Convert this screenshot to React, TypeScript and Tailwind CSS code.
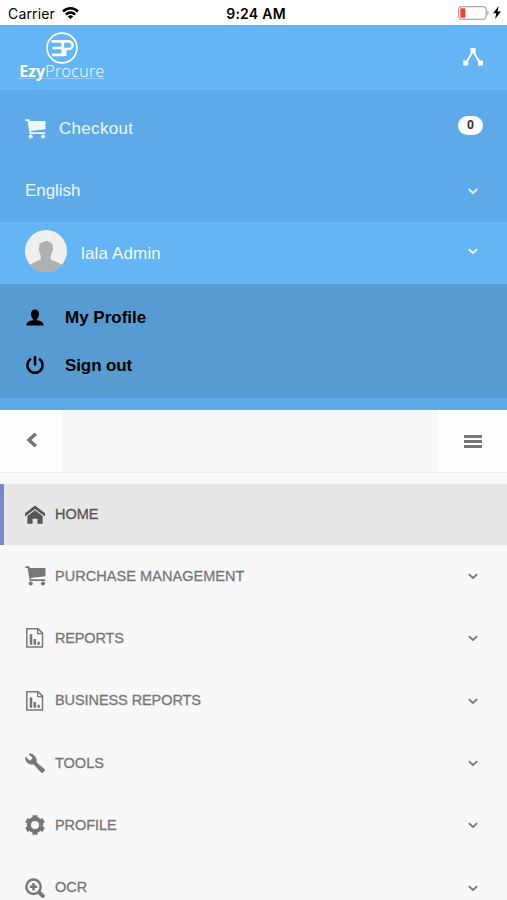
import React from "react";

const Chevron = () => (
  <svg className="mr-7 h-3 w-3 shrink-0" viewBox="0 0 12 12" fill="none" stroke="currentColor" strokeWidth="1.7">
    <path d="M1.800 4.200 6 8l4.200-3.800" />
  </svg>
);

const Cart = () => (
  <svg className="h-5 w-[21px]" viewBox="0 0 21 20" fill="currentColor">
    <path d="M.3.300h4l.6 1.700H20.500V10.200L5.800 12l.3 1.200h14.100v1.700H4.700L2.600 2H.3z" />
    <circle cx="5.700" cy="17.500" r="2.100" />
    <circle cx="18" cy="17.500" r="2.100" />
  </svg>
);

const Home = () => (
  <svg className="h-5 w-5" viewBox="0 0 20 20" fill="currentColor">
    <path d="M10 .5 0 8.300v3.300L10 4l10 7.600V8.300z" />
    <path d="m10 5.200 7.600 5.800v7.700h-5.200v-5H7.600v5H2.400V11z" />
  </svg>
);

const Report = () => (
  <svg className="h-5 w-5" viewBox="0 0 20 20" fill="none" stroke="currentColor">
    <path strokeWidth="1.500" strokeLinejoin="round" d="M1.800.8h11.300l4.400 4.300v14H1.800z" />
    <path strokeWidth="1.300" d="M12.600 1v4.600h4.700" />
    <path strokeWidth="2.500" d="M6 6.300v10.500M9.800 11v5.800M13.600 13.800v3" />
  </svg>
);

const Wrench = () => (
  <svg className="h-5 w-5" viewBox="0 0 20 20" fill="currentColor" stroke="currentColor" strokeWidth=".9">
    <path d="M19.300 16.400 11 9.200c.8-3.100-.7-6.600-4-7.800C5.900.9 4.900.8 4 1l3.300 3.200c.5.500.4 1.100 0 1.600L5.600 7.500c-.5.400-1.100.4-1.600 0L.7 4.300C.1 9 4.500 12 8.700 10.900l7.400 8.200c.5.600 1.200.6 1.700.1l1.500-1.400c.5-.4.5-1 0-1.400z" />
  </svg>
);

const Gear = () => (
  <svg className="h-5 w-5" viewBox="0 0 20 20" fill="none" stroke="currentColor">
    <circle cx="10" cy="10" r="6.100" strokeWidth="4.200" />
    <path strokeWidth="5" d="M10 .3v4M10 15.700v4M1.400 5.200l3.300 1.900M15.300 12.900l3.300 1.900M1.400 14.800l3.300-1.900M15.300 7.100l3.300-1.900" />
  </svg>
);

const ZoomIn = () => (
  <svg className="h-5 w-5" viewBox="0 0 20 20" fill="none" stroke="currentColor">
    <circle cx="8.500" cy="8.700" r="7.200" strokeWidth="2.500" />
    <path strokeWidth="2.500" d="M8.500 5v7.400M4.800 8.700h7.400" />
    <path strokeWidth="4" strokeLinecap="round" d="m14.400 14.700 3.400 3.200" />
  </svg>
);

const Logo = () => (
  <div className="flex h-full w-[86px] flex-col items-center text-white">
    <svg className="mt-[7px] h-8 w-8 shrink-0" viewBox="0 0 32 32" fill="none" stroke="currentColor">
      <circle cx="16" cy="16" r="14.900" strokeWidth="1.700" />
      <path strokeWidth="2.700" d="M5.500 9.300h11.300v13.500H6M6.500 16h10M19.200 24V17h3.500a3.800 3.800 0 0 0 0-7.700H18" />
    </svg>
    <div className="mt-[-1px] flex h-4 items-center border-b border-white/30 font-['Open_Sans',sans-serif] text-[16px] leading-4">
      <span className="font-bold">Ezy</span>
      <span className="font-light tracking-[0.350px]">Procure</span>
    </div>
  </div>
);

const items = [
  { label: "PURCHASE MANAGEMENT", icon: <Cart />, spacing: "ml-[-1px] tracking-[0.050px]" },
  { label: "REPORTS", icon: <Report />, spacing: "tracking-[-0.150px]" },
  { label: "BUSINESS REPORTS", icon: <Report />, spacing: "tracking-[-0.080px]" },
  { label: "TOOLS", icon: <Wrench />, spacing: "" },
  { label: "PROFILE", icon: <Gear />, spacing: "tracking-[-0.080px]" },
  { label: "OCR", icon: <ZoomIn />, spacing: "" },
];

export default function App() {
  return (
    <div className="flex h-[900px] w-full flex-col overflow-hidden bg-[#f8f8f8] font-['Liberation_Sans',Arial,sans-serif]">
      <div className="grid h-[25px] shrink-0 grid-cols-3 items-center bg-white pt-[2px] font-['Inter',sans-serif] text-[14px] text-black">
        <div className="flex items-center gap-[7px] pl-2 tracking-[0.150px]">
          <span>Carrier</span>
          <svg className="mb-[2px] h-3 w-[17px]" viewBox="0 0 17 12" fill="none" stroke="#000">
            <path strokeWidth="2.500" d="M1 4.500c4.300-4.300 10.700-4.300 15 0M3.900 7.600c2.600-2.700 6.600-2.700 9.200 0" />
            <path fill="#000" stroke="none" d="M5.800 9.400c1.600-1.500 3.800-1.500 5.400 0L8.500 12z" />
          </svg>
        </div>
        <div className="pl-[5px] text-center font-semibold tracking-[0.250px]">9:24 AM</div>
        <div className="flex items-center justify-end gap-1 pr-[6px] pb-[2px]">
          <svg className="h-[14px] w-8" viewBox="0 0 32 14">
            <rect x="1.600" y=".600" width="27.500" height="12.800" rx="3.200" fill="none" stroke="#aaa" strokeWidth="1.200" />
            <rect x="3.300" y="2.300" width="5" height="9.400" rx="1" fill="#ff3b30" />
            <path d="M30.200 4.700c2 .7 2 3.900 0 4.600z" fill="#aaa" />
          </svg>
          <svg className="h-[13px] w-2" viewBox="0 0 8 13">
            <path d="M5.600 0 0 7.300h3.300L2.100 13 8 5.400H4.600z" />
          </svg>
        </div>
      </div>

      <header className="flex h-[65px] shrink-0 items-center justify-between bg-[#64b5f6] pr-[23px] pl-[19px]">
        <Logo />
        <svg className="mb-[2px] h-5 w-[22px]" viewBox="0 0 22 20" fill="white" stroke="white">
          <path strokeWidth="1.900" fill="none" d="m4 16 7-12 7 12" />
          <path stroke="none" d="M8.500 1h5v5h-5zM1.200 13.500h5v5h-5zM16 13.500h5v5h-5z" />
        </svg>
      </header>

      <div className="flex h-[132px] shrink-0 flex-col bg-[#5eaae8] text-[17px] text-white/90">
        <div className="flex h-[70px] items-center pt-[7px] pr-6 pl-[25px]">
          <Cart />
          <span className="ml-[13px] tracking-[0.300px]">Checkout</span>
          <span className="mb-[7px] ml-auto flex h-[19px] w-[25px] items-center justify-center rounded-full bg-white font-['Roboto',sans-serif] text-[12px] font-bold text-[#333]">0</span>
        </div>
        <div className="flex h-[62px] items-center justify-between pl-[25px]">
          <span className="tracking-[-0.050px]">English</span>
          <Chevron />
        </div>
      </div>

      <div className="flex h-[62px] shrink-0 items-center bg-[#64b5f6] pl-[25px] text-[17px] text-white/95">
        <svg className="mb-[4px] h-[42px] w-[42px]" viewBox="0 0 42 42">
          <circle cx="21" cy="21" r="21" fill="#efefef" />
          <path fill="#b0b0b0" d="M5 35c3-3 8-4 10.800-5.800v-3.400c-.8-1.300-1.300-2.700-1.400-4.200-1-1.500-1-3.500-.1-4.400-.2-3.600 2-5 4.600-5.400 1.400-1.200 4.200-.8 5.200.4 3 .4 4 2.500 3.600 5.200.5 1.200.3 3-.5 4-.2 1.700-.7 3-1.500 4.400v3.400C28.500 31 33.700 32 37 35A21 21 0 0 1 5 35z" />
        </svg>
        <span className="ml-[14px] pt-px tracking-[0.150px]">lala Admin</span>
        <span className="mb-[4px] ml-auto"><Chevron /></span>
      </div>

      <nav className="flex h-[114px] shrink-0 flex-col bg-[#569cd2] pt-[10px] pl-[25px] text-[17px] font-bold text-black">
        <div className="flex h-12 items-center gap-[20px]">
          <svg className="h-5 w-5" viewBox="0 0 20 20">
            <path d="M6 6c0-3 1.500-4.600 4-4.600s4 1.600 4 4.600c0 2.500-1 4.400-2.100 5.300v1c3.900.3 6.600 1.900 6.800 5.200H1.300c.2-3.300 2.900-4.900 6.800-5.200v-1C7 10.400 6 8.500 6 6z" />
          </svg>
          <span>My Profile</span>
        </div>
        <div className="flex h-[47px] items-center gap-[20px]">
          <svg className="mb-px h-5 w-5" viewBox="0 0 20 20" fill="none" stroke="#000" strokeWidth="2.500">
            <path d="M6 3.700a7.600 7.600 0 1 0 8 0M10 1v9.500" />
          </svg>
          <span className="tracking-[-0.100px]">Sign out</span>
        </div>
      </nav>
      <div className="h-3 shrink-0 bg-[#5eaae8]" />

      <div className="flex h-[63px] shrink-0 justify-between border-b border-[#e8e8e8] text-[#777]">
        <div className="flex w-[62px] items-center bg-[#fefefe] pl-[26px]">
          <svg className="mb-[2px] h-4 w-3" viewBox="0 0 12 16" fill="none" stroke="currentColor" strokeWidth="3.500">
            <path d="M9.800 1.700 3 8l6.800 6.300" />
          </svg>
        </div>
        <div className="flex w-[69px] items-center bg-[#fefefe] pl-[26px]">
          <svg className="mt-px h-[13px] w-[18px]" viewBox="0 0 18 13" fill="currentColor">
            <path d="M0 0h18v3H0zM0 5h18v3H0zM0 10h18v3H0z" />
          </svg>
        </div>
      </div>

      <nav className="mt-[11px] flex shrink-0 flex-col text-[14.500px] text-[#777] [-webkit-text-stroke:0.300px_currentColor]">
        <div className="flex h-[61px] items-center gap-[10px] border-l-4 border-[#7986cb] bg-[#e7e7e7] pl-[21px] text-[#555]">
          <Home />
          <span>HOME</span>
        </div>
        {items.map(({ label, icon, spacing }) => (
          <div key={label} className="flex h-[62.300px] items-center gap-[10px] pl-[25px]">
            {icon}
            <span className={`pt-px ${spacing}`}>{label}</span>
            <span className="ml-auto"><Chevron /></span>
          </div>
        ))}
      </nav>
    </div>
  );
}
